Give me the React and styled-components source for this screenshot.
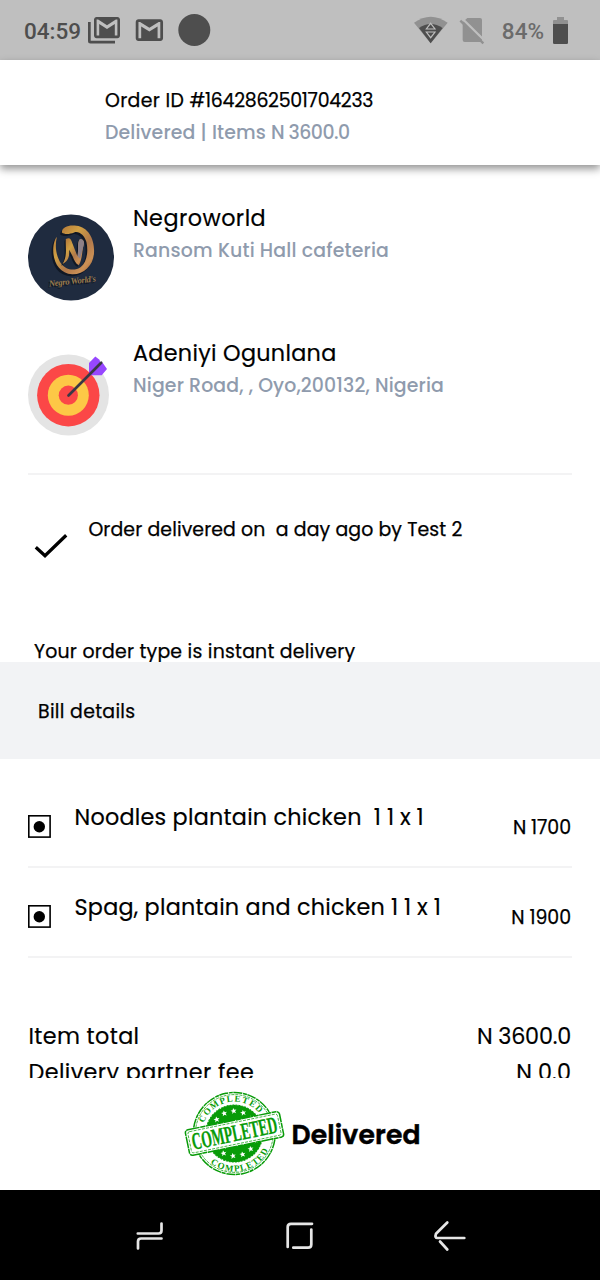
import React from "react";
import styled, { createGlobalStyle } from "styled-components";

const GlobalStyle = createGlobalStyle`
  *, *::before, *::after { box-sizing: border-box; }
  body { margin: 0; background: #fff; }
  svg { display: block; flex: none; }
`;

const Screen = styled.div`
  width: 600px;
  height: 1280px;
  display: flex;
  flex-direction: column;
  overflow: hidden;
  background: #fff;
  color: #000;
  font-family: Poppins, Inter, sans-serif;
`;

const StatusBar = styled.header`
  height: 60px;
  flex: none;
  display: flex;
  justify-content: space-between;
  padding: 0 31px 0 24px;
  background: #bfbfbf;
  color: #4e4e4e;
`;

const StatusGroup = styled.div`
  display: flex;
  align-items: center;
  gap: ${(p) => p.$gap}px;
`;

const StatusText = styled.span`
  font: 500 22.5px/30px Roboto, sans-serif;
  margin-left: ${(p) => p.$indent || 0}px;
  padding-top: 1px;
  color: ${(p) => p.$color || "#4e4e4e"};
`;

const TitleBar = styled.div`
  position: relative;
  z-index: 1;
  height: 105px;
  flex: none;
  padding: 25px 0 0 105px;
  background: #fff;
  box-shadow: 0 4px 8px rgba(0, 0, 0, 0.42);
`;

const Text = styled.div`
  font-size: ${(p) => (p.$large ? "22.3px" : "18.9px")};
  font-weight: ${(p) => p.$weight || 400};
  line-height: 32px;
  white-space: pre;
  letter-spacing: ${(p) => p.$spacing || 0}px;
  color: ${(p) => (p.$muted ? "#8f9bad" : "#000")};
  -webkit-text-stroke: ${(p) => (p.$muted ? 0 : p.$large ? 0.18 : 0.25)}px currentColor;
`;

const Digits = styled.span`
  letter-spacing: ${(p) => p.$spacing}px;
`;

const Content = styled.main`
  height: 913px;
  flex: none;
  overflow: hidden;
`;

const Places = styled.section`
  margin: 0 28px;
  height: 310px;
  padding-top: 38px;
  border-bottom: 2px solid #f3f3f4;
`;

const Place = styled.div`
  display: flex;
  height: 135px;
`;

const PlaceIcon = styled.div`
  width: 105px;
  padding-top: ${(p) => p.$top}px;
`;

const DeliveryNote = styled.section`
  display: flex;
  height: 160px;
  padding: 39px 0 0 34px;
`;

const CheckIcon = styled.div`
  width: 54.4px;
  padding-top: 19px;
`;

const OrderType = styled.div`
  height: 27px;
  padding: 1px 0 0 34px;
  overflow: hidden;
`;

const BillHeading = styled.div`
  height: 97px;
  padding: 34px 0 0 38px;
  background: #f2f3f5;
`;

const Items = styled.div`
  padding: 19px 28px 0;
`;

const Item = styled.div`
  display: flex;
  height: 90px;
  padding-top: 24px;
  border-bottom: 2px solid #f3f3f4;
`;

const ItemMark = styled.div`
  width: 46.5px;
  padding-top: 13px;
`;

const ItemName = styled.div`
  flex: 1;
  display: flex;
`;

const ItemPrice = styled.div`
  padding: 10px 1px 0 0;
`;

const Totals = styled.div`
  padding: 63px 29px 0 28.5px;
`;

const TotalRow = styled.div`
  display: flex;
  justify-content: space-between;
  height: 36px;
`;

const Footer = styled.footer`
  height: 112px;
  flex: none;
  display: flex;
  padding: 13px 0 0 184px;
  background: #fff;
`;

const FooterLabel = styled.div`
  padding: 28px 0 0 6.5px;
  font-size: 26.6px;
  font-weight: 600;
  line-height: 32px;
  letter-spacing: 0.15px;
  -webkit-text-stroke: 0.5px currentColor;
`;

const NavBar = styled.nav`
  height: 90px;
  flex: none;
  display: flex;
  justify-content: space-around;
  align-items: center;
  padding: 0 75px;
  background: #000;
`;

const GMAIL =
  "M20 4H4c-1.1 0-2 .9-2 2v12c0 1.1.9 2 2 2h16c1.1 0 2-.9 2-2V6c0-1.1-.9-2-2-2zm0 14h-2V9.25L12 13 6 9.25V18H4V6h1.2l6.8 4.25L18.8 6H20v12z";

function MailIcons() {
  return (
    <svg width="125" height="60" viewBox="88 0 125 60" fill="#4e4e4e">
      <path transform="translate(91.4 11.6) scale(1.3 1.33)" d={GMAIL} />
      <path d="M88 22h2.7v18.7H115v2.9H90.5q-2.500 0-2.500-2.500z" />
      <path transform="translate(133 13.9) scale(1.365 1.355)" d={GMAIL} />
      <circle cx="194.3" cy="30" r="16" />
    </svg>
  );
}

function SignalIcons() {
  return (
    <svg width="73" height="60" viewBox="104 0 219 180">
      <path d="M104 68Q154 32 205 68L154 130Z" fill="#919191" />
      <path d="M119 84Q154 60 190 84L154 130Z" fill="#4e4e4e" />
      <path d="M154 70l13 17h-26zM141 96h26l-13 17z" fill="#4e4e4e" stroke="#bfbfbf" strokeWidth="3.5" />
      <path d="M264 54h38q6 0 6 6v60q0 6-6 6h-46q-6 0-6-6V67z" fill="#919191" />
      <path d="M247 54l70 69" stroke="#bfbfbf" strokeWidth="7" />
      <path d="M243 62l69 68" stroke="#919191" strokeWidth="7" />
    </svg>
  );
}

function BatteryIcon() {
  return (
    <svg width="16" height="27" viewBox="519 48 48 81">
      <path d="M531 48h21v9h9q3 0 3 3v9h-45v-9q0-3 3-3h9z" fill="#919191" />
      <path d="M519 69h45v56q0 4-4 4h-37q-4 0-4-4z" fill="#4e4e4e" />
    </svg>
  );
}

const RING =
  "M156 126C155 110 178 102 200 106C235 110 254 145 253 184C252 224 224 253 187 252C149 250 130 216 130 180C130 161 135 145 141 140C134 169 139 197 153 219C167 239 194 244 213 230C232 215 236 182 230 155C224 135 208 121 193 126C178 132 163 132 156 126Z";
const LETTER =
  "M158 221C174 197 166 169 168 146C179 139 184 146 187 157L203 198C207 179 202 160 209 148C216 143 225 152 222 162C216 182 218 207 207 225C197 220 193 209 188 197L178 178C180 198 174 214 158 221Z";

function VendorLogo() {
  return (
    <svg width="86" height="87" viewBox="54 71 259 261">
      <defs>
        <linearGradient id="gold" x1="0" y1="0" x2="1" y2="1">
          <stop offset="0" stopColor="#a86935" />
          <stop offset=".35" stopColor="#d0a044" />
          <stop offset=".6" stopColor="#b0784a" />
          <stop offset=".8" stopColor="#cb9055" />
          <stop offset="1" stopColor="#9a5c35" />
        </linearGradient>
      </defs>
      <circle cx="183.5" cy="201.5" r="129.5" fill="#1f2b3f" />
      <path d={RING} transform="translate(-5 6)" fill="#101724" />
      <path d={RING} fill="url(#gold)" />
      <path d={LETTER} transform="translate(-4 5)" fill="#101724" />
      <path d={LETTER} fill="url(#gold)" />
      <path d="M209 148C216 143 225 152 222 162L211 205L203 198C207 179 202 160 209 148Z" fill="#8d8088" />
      <g fontFamily="Liberation Serif, serif" fontStyle="italic" fontWeight="700" fontSize="26" transform="rotate(-6 190 276)">
        <text x="113" y="285" fill="#0f1622" textLength="142">Negro World's</text>
        <text x="117" y="281" fill="#9c7c4b" textLength="142">Negro World's</text>
      </g>
    </svg>
  );
}

function TargetIcon() {
  return (
    <svg width="81" height="82" viewBox="28 354 81 82">
      <circle cx="68.5" cy="395" r="40.5" fill="#e4e4e4" />
      <circle cx="68.3" cy="395.2" r="31.2" fill="#fb4747" />
      <circle cx="68.3" cy="395.2" r="20.5" fill="#fdc846" />
      <circle cx="68.3" cy="395.2" r="9.6" fill="#fb4747" />
      <path d="M89 363l6.3-6.500 4.200 3.300.8 2.500 2.500.7 4.200 6-5.300 6.300H89z" fill="#9747ff" />
      <path d="M68.5 395.500l32.7-32.700" stroke="#3a3845" strokeWidth="2.7" strokeLinecap="round" />
    </svg>
  );
}

function ItemIcon() {
  return (
    <svg width="23" height="23" viewBox="0 0 23 23">
      <rect x=".8" y=".8" width="21.3" height="21.3" fill="none" stroke="#000" strokeWidth="1.6" />
      <circle cx="11.3" cy="11.7" r="5.7" />
    </svg>
  );
}

const STARS = [-155, -130, -105, -80, -55, -30, 155, 130, 105, 80, 55, 30];

function Stamp() {
  return (
    <svg width="101" height="86" viewBox="184 1091 101 86">
      <defs>
        <path id="ringTop" d="M202.3 1133.5a32 32 0 0 1 64 0" />
        <path id="ringBottom" d="M196.3 1133.5a38 38 0 0 0 76 0" />
      </defs>
      <g transform="rotate(-11.6 234.3 1133.5)" fill="none" stroke="#089b08">
        <circle cx="234.3" cy="1133.5" r="41" strokeWidth="1.5" strokeDasharray="9 .8 4 .5" />
        <circle cx="234.3" cy="1133.5" r="38.9" strokeWidth=".7" strokeDasharray="3 1" />
        <circle cx="234.3" cy="1133.5" r="28.5" fill="#089b08" strokeWidth="1" strokeDasharray="2 1" />
        {STARS.map((a) => (
          <path
            key={a}
            transform={`translate(${234.3 + 22.5 * Math.cos((a * Math.PI) / 180)} ${1133.5 + 22.5 * Math.sin((a * Math.PI) / 180)})`}
            d="M0-3l.9 2h2.100l-1.700 1.400.7 2.200L0 1.300l-2 1.300.7-2.200L-3-1h2.100z"
            fill="#fff"
            stroke="none"
          />
        ))}
        <g fill="#089b08" stroke="none" fontFamily="Liberation Serif, serif" fontWeight="700" fontSize="9">
          <text><textPath href="#ringTop" startOffset="17" textLength="68">COMPLETED</textPath></text>
          <text><textPath href="#ringBottom" startOffset="26" textLength="68">COMPLETED</textPath></text>
        </g>
        <rect x="186.5" y="1120.5" width="96" height="26" rx="3" fill="#fff" strokeWidth="1.5" strokeDasharray="12 .7 5 .5" />
        <rect x="188.8" y="1122.7" width="91.4" height="21.6" rx="2" strokeWidth=".7" strokeDasharray="3 1.2" />
        <text
          x="191"
          y="1141.3"
          fill="#089b08"
          stroke="#089b08"
          strokeWidth=".3"
          fontFamily="Liberation Serif, serif"
          fontWeight="700"
          fontSize="24"
          textLength="87"
          lengthAdjust="spacingAndGlyphs"
        >
          COMPLETED
        </text>
      </g>
    </svg>
  );
}

function NavIcon({ d }) {
  return (
    <svg width="34" height="34" viewBox="0 0 34 34" fill="none" stroke="#e6e6e6" strokeWidth="2.7" strokeLinecap="round" strokeLinejoin="round">
      <path d={d} />
    </svg>
  );
}

const ITEMS = [
  { name: "Noodles plantain chicken ", price: "N 1700" },
  { name: "Spag, plantain and chicken", price: "N 1900" },
];

export default function App() {
  return (
    <Screen>
      <GlobalStyle />
      <StatusBar>
        <StatusGroup $gap={7}>
          <StatusText>04:59</StatusText>
          <MailIcons />
        </StatusGroup>
        <StatusGroup $gap={9}>
          <SignalIcons />
          <StatusText $color="#6b6b6b" $indent={6}>84%</StatusText>
          <BatteryIcon />
        </StatusGroup>
      </StatusBar>
      <TitleBar>
        <Text $spacing={0.33}>Order ID <Digits $spacing={-0.28}>#1642862501704233</Digits></Text>
        <Text $weight={500} $muted $spacing={0.14}>Delivered | Items <Digits $spacing={-0.52}>N 3600.0</Digits></Text>
      </TitleBar>
      <Content>
        <Places>
          <Place>
            <PlaceIcon $top={11}><VendorLogo /></PlaceIcon>
            <div>
              <Text $large $spacing={0.45}>Negroworld</Text>
              <Text $weight={500} $muted $spacing={0.17}>Ransom Kuti Hall cafeteria</Text>
            </div>
          </Place>
          <Place>
            <PlaceIcon $top={16}><TargetIcon /></PlaceIcon>
            <div>
              <Text $large $spacing={0.3}>Adeniyi Ogunlana</Text>
              <Text $weight={500} $muted $spacing={0.14}>Niger Road, , Oyo,200132, Nigeria</Text>
            </div>
          </Place>
        </Places>
        <DeliveryNote>
          <CheckIcon>
            <svg width="34" height="26" viewBox="0 0 34 26">
              <path d="M1.800 14.200L11 22.700 32.200 2.300" fill="none" stroke="#000" strokeWidth="3.3" />
            </svg>
          </CheckIcon>
          <Text $spacing={0.1}>Order delivered on  a day ago by Test 2</Text>
        </DeliveryNote>
        <OrderType>
          <Text $spacing={0.22}>Your order type is instant delivery</Text>
        </OrderType>
        <BillHeading>
          <Text $spacing={0.3}>Bill details</Text>
        </BillHeading>
        <Items>
          {ITEMS.map((item) => (
            <Item key={item.name}>
              <ItemMark><ItemIcon /></ItemMark>
              <ItemName>
                <Text $large $spacing={0.24}>{item.name}</Text>
                <Text $large> 1 1 x 1</Text>
              </ItemName>
              <ItemPrice><Text $spacing={-0.05}>{item.price}</Text></ItemPrice>
            </Item>
          ))}
        </Items>
        <Totals>
          <TotalRow>
            <Text $large $spacing={0.35}>Item total</Text>
            <Text $large $spacing={-0.2}>N 3600.0</Text>
          </TotalRow>
          <TotalRow>
            <Text $large $spacing={0.4}>Delivery partner fee</Text>
            <Text $large $spacing={0.1}>N 0.0</Text>
          </TotalRow>
        </Totals>
      </Content>
      <Footer>
        <Stamp />
        <FooterLabel>Delivered</FooterLabel>
      </Footer>
      <NavBar>
        <NavIcon d="M28.500 5.500V12.500Q28.500 15.500 25.500 15.500H4.800M28.500 20.500H8Q5 20.500 5 23.500V30.500" />
        <NavIcon d="M29 5.800H8Q4.700 5.800 4.700 9V29M10.300 29.700H25Q28.300 29.700 28.300 26.500V11.500" />
        <NavIcon d="M14.300 4.500L3 15.800Q1.500 20 4.500 20H31.300M7 23.500L14.300 31.500" />
      </NavBar>
    </Screen>
  );
}
